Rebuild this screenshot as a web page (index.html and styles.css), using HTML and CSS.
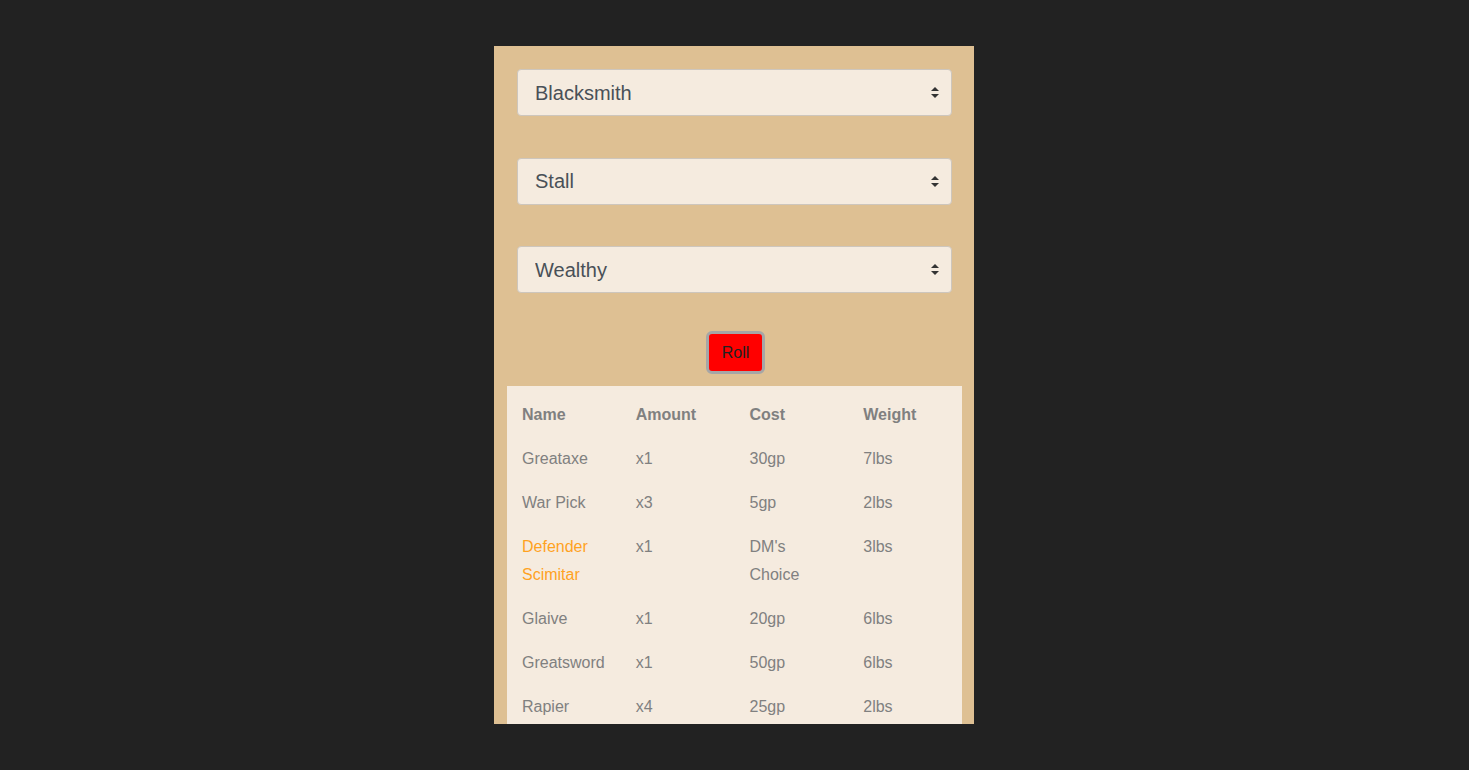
FILE: index.html
```html
<!DOCTYPE html>
<html>
<head>
<meta charset="utf-8">
<link rel="stylesheet" href="styles.css">
</head>
<body>
<div class="panel">
  <div class="controls">
    <div class="select-wrap">
      <select class="sel"><option>Blacksmith</option></select>
      <svg class="arrow" width="8" height="11" viewBox="0 0 8 11"><path d="M4 0 L8 4 L0 4 Z M0 7 L8 7 L4 11 Z" fill="#333"/></svg>
    </div>
    <div class="select-wrap">
      <select class="sel"><option>Stall</option></select>
      <svg class="arrow" width="8" height="11" viewBox="0 0 8 11"><path d="M4 0 L8 4 L0 4 Z M0 7 L8 7 L4 11 Z" fill="#333"/></svg>
    </div>
    <div class="select-wrap">
      <select class="sel"><option>Wealthy</option></select>
      <svg class="arrow" width="8" height="11" viewBox="0 0 8 11"><path d="M4 0 L8 4 L0 4 Z M0 7 L8 7 L4 11 Z" fill="#333"/></svg>
    </div>
  </div>
  <div class="roll-row"><button class="roll">Roll</button></div>
  <div class="results">
    <table class="items">
      <thead>
        <tr><th>Name</th><th>Amount</th><th>Cost</th><th>Weight</th></tr>
      </thead>
      <tbody>
        <tr><td>Greataxe</td><td>x1</td><td>30gp</td><td>7lbs</td></tr>
        <tr><td>War Pick</td><td>x3</td><td>5gp</td><td>2lbs</td></tr>
        <tr><td class="magic">Defender Scimitar</td><td>x1</td><td>DM's Choice</td><td>3lbs</td></tr>
        <tr><td>Glaive</td><td>x1</td><td>20gp</td><td>6lbs</td></tr>
        <tr><td>Greatsword</td><td>x1</td><td>50gp</td><td>6lbs</td></tr>
        <tr><td>Rapier</td><td>x4</td><td>25gp</td><td>2lbs</td></tr>
      </tbody>
    </table>
  </div>
</div>
</body>
</html>
```

FILE: styles.css
```css
html, body {
  margin: 0;
  padding: 0;
}
body {
  background: #222222;
  font-family: "Liberation Sans", Arial, sans-serif;
  display: flex;
  justify-content: center;
  padding: 46px 1px 0 0;
  height: 770px;
  box-sizing: border-box;
  overflow: hidden;
}
.panel {
  width: 480px;
  height: 678px;
  flex: none;
  box-sizing: border-box;
  background: #dec093;
  padding: 13px 12px 0 13px;
  overflow: hidden;
}
.controls {
  padding: 10px;
  display: flex;
  flex-direction: column;
  gap: 41.5px;
}
.select-wrap {
  position: relative;
  height: 47px;
}
.sel {
  -webkit-appearance: none;
  appearance: none;
  width: 100%;
  height: 47px;
  box-sizing: border-box;
  background: #f5ebdf;
  border: 1px solid #cdc6bd;
  border-radius: 4px;
  padding: 0 17px;
  font-family: "Liberation Sans", Arial, sans-serif;
  font-size: 20px;
  color: #495057;
  outline: none;
}
.arrow {
  position: absolute;
  right: 13px;
  top: 18px;
  pointer-events: none;
}
.roll-row {
  display: flex;
  justify-content: center;
  margin-top: 28px;
  margin-bottom: 12px;
}
.roll {
  width: 59px;
  height: 43px;
  box-sizing: border-box;
  background: #ff0000;
  border: 3px solid #a6a6a6;
  border-radius: 6px;
  font-family: "Liberation Sans", Arial, sans-serif;
  font-size: 16px;
  color: #222;
  padding: 0;
  margin-left: 2px;
}
.results {
  background: #f5ebdf;
  padding-top: 7px;
  min-height: 400px;
}
.items {
  width: 100%;
  table-layout: fixed;
  border-collapse: collapse;
  font-size: 16px;
  color: #808080;
}
.items th, .items td {
  text-align: left;
  vertical-align: top;
  padding: 8px 15px;
  line-height: 28px;
}
.items th {
  font-weight: bold;
}
.items .magic {
  color: #ffa21f;
}
```
